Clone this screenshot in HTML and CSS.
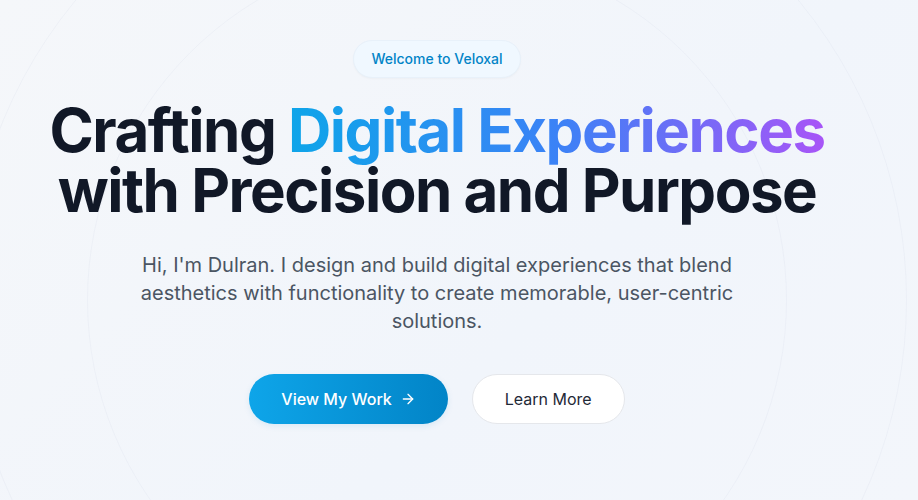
FILE: index.html
```html
<!DOCTYPE html>
<html lang="en">
<head>
<meta charset="utf-8">
<title>Veloxal</title>
<link rel="stylesheet" href="styles.css">
</head>
<body>
<section class="hero">
  <div class="rings" aria-hidden="true">
    <span class="ring ring-lg"></span>
    <span class="ring ring-md"></span>
  </div>
  <div class="hero-inner">
    <span class="badge">Welcome to Veloxal</span>
    <h1 class="title">Crafting <span class="grad">Digital Experiences</span><br>with Precision and Purpose</h1>
    <p class="lead">Hi, I'm Dulran. I design and build digital experiences that blend aesthetics with functionality to create memorable, user-centric solutions.</p>
    <div class="actions">
      <a class="btn btn-primary" href="#">View My Work
        <svg width="16" height="16" viewBox="0 0 24 24" fill="none" stroke="currentColor" stroke-width="2" stroke-linecap="round" stroke-linejoin="round"><path d="M5 12h14"/><path d="m12 5 7 7-7 7"/></svg>
      </a>
      <a class="btn btn-secondary" href="#">Learn More</a>
    </div>
  </div>
</section>
</body>
</html>
```
FILE: styles.css
```css
* { box-sizing: border-box; }
html, body { margin: 0; padding: 0; }
body {
  font-family: "Inter", "Liberation Sans", sans-serif;
  background: #f4f7fb;
  color: #111827;
  overflow: hidden;
}
.hero {
  position: relative;
  height: 500px;
  padding: 40px 44px 0 0;
  background: linear-gradient(135deg, #f5f7fa 0%, #f1f5fb 60%, #f3f6fb 100%);
  overflow: hidden;
}
.rings { position: absolute; inset: 0; pointer-events: none; }
.ring {
  position: absolute;
  border-radius: 50%;
  border: 1px solid rgba(203, 213, 225, 0.18);
}
.ring-lg { width: 940px; height: 940px; left: -33px; top: -170px; }
.ring-md { width: 700px; height: 700px; left: 87px; top: -50px; }
.hero-inner {
  position: relative;
  display: flex;
  flex-direction: column;
  align-items: center;
  text-align: center;
}
.badge {
  display: inline-block;
  padding: 8px 17px;
  font-size: 14px;
  line-height: 20px;
  font-weight: 500;
  color: #0284c7;
  background: #f0f8ff;
  border: 1px solid #e8f1fa;
  border-radius: 999px;
  box-shadow: 0 1px 2px rgba(15, 23, 42, 0.03);
}
.title {
  margin: 22px 0 0;
  font-size: 60px;
  line-height: 60px;
  font-weight: 700;
  letter-spacing: -0.025em;
  color: #111827;
}
.grad {
  background: linear-gradient(90deg, #0ea5e9 0%, #3b82f6 50%, #a855f7 100%);
  -webkit-background-clip: text;
  background-clip: text;
  color: transparent;
}
.lead {
  margin: 31px 0 0;
  max-width: 672px;
  font-size: 20px;
  line-height: 28px;
  color: #4b5563;
}
.actions {
  display: flex;
  gap: 24px;
  margin-top: 39px;
}
.btn {
  display: inline-flex;
  align-items: center;
  gap: 8px;
  height: 50px;
  padding: 0 32px;
  border-radius: 999px;
  font-size: 16px;
  font-weight: 500;
  text-decoration: none;
}
.btn-primary {
  color: #fff;
  background: linear-gradient(90deg, #0ea5e9 0%, #0284c7 100%);
  box-shadow: 0 2px 6px rgba(2, 132, 199, 0.1);
}
.btn-secondary {
  color: #1f2937;
  font-weight: 400;
  background: #fff;
  border: 1px solid #e5e7eb;
}
```
